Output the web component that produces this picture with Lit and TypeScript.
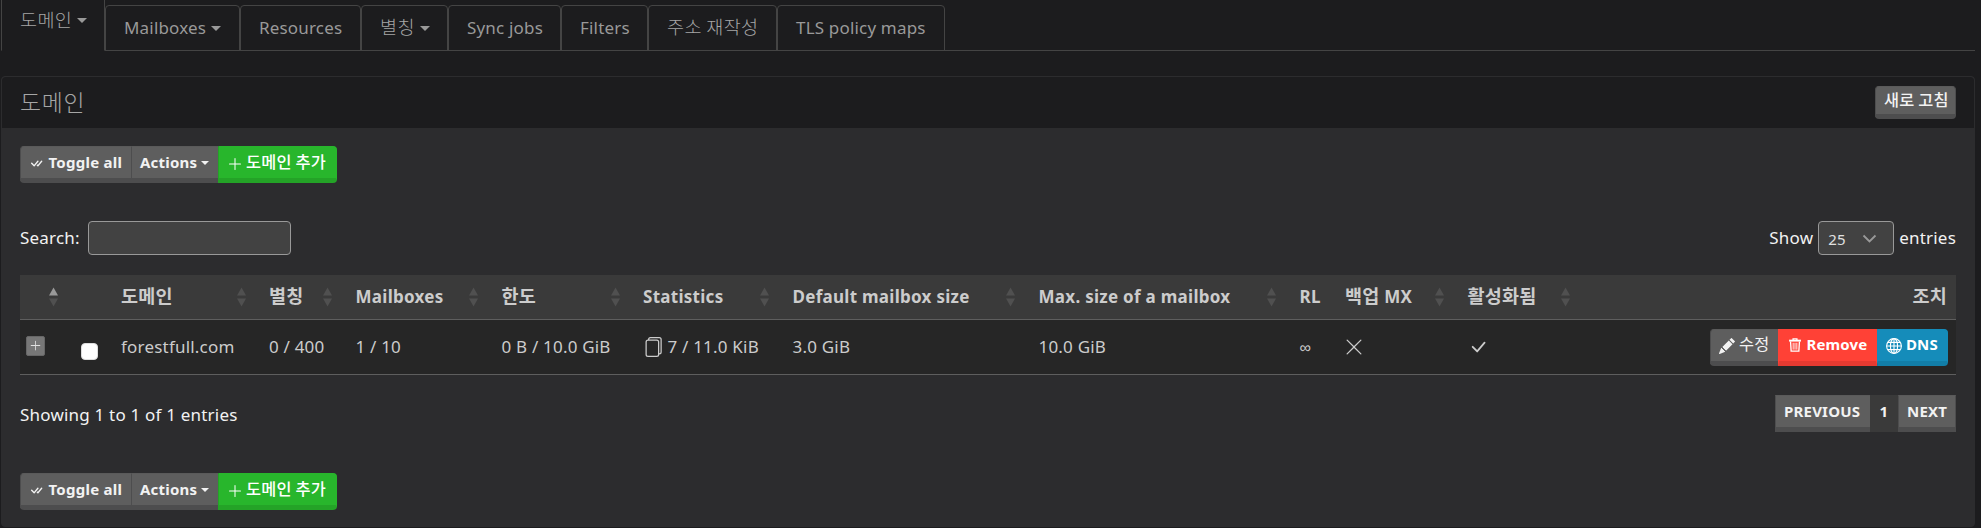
import { LitElement, html, svg, css, nothing } from "lit";
import { customElement, property } from "lit/decorators.js";

const ICONS: Record<string, string> = {
  checkAll: "M8.97 4.97a.75.75 0 0 1 1.07 1.05l-3.99 4.99a.75.75 0 0 1-1.08.02L2.324 8.384a.75.75 0 1 1 1.06-1.06l2.094 2.093L8.95 4.992zm-.92 5.14.92.92a.75.75 0 0 0 1.079-.02l3.992-4.99a.75.75 0 1 0-1.091-1.028L9.477 9.417l-.485-.486z",
  plus: "M8 2a.5.5 0 0 1 .5.5v5h5a.5.5 0 0 1 0 1h-5v5a.5.5 0 0 1-1 0v-5h-5a.5.5 0 0 1 0-1h5v-5A.5.5 0 0 1 8 2",
  files: "M13 0H6a2 2 0 0 0-2 2 2 2 0 0 0-2 2v10a2 2 0 0 0 2 2h7a2 2 0 0 0 2-2 2 2 0 0 0 2-2V2a2 2 0 0 0-2-2m0 13V4a2 2 0 0 0-2-2H5a1 1 0 0 1 1-1h7a1 1 0 0 1 1 1v10a1 1 0 0 1-1 1M3 4a1 1 0 0 1 1-1h7a1 1 0 0 1 1 1v10a1 1 0 0 1-1 1H4a1 1 0 0 1-1-1z",
  x: "M2.146 2.854a.5.5 0 1 1 .708-.708L8 7.293l5.146-5.147a.5.5 0 0 1 .708.708L8.707 8l5.147 5.146a.5.5 0 0 1-.708.708L8 8.707l-5.146 5.147a.5.5 0 0 1-.708-.708L7.293 8z",
  check: "M12.736 3.97a.733.733 0 0 1 1.047 0c.286.289.29.756.01 1.05L7.88 12.01a.733.733 0 0 1-1.065.02L3.217 8.384a.757.757 0 0 1 0-1.06.733.733 0 0 1 1.047 0l3.052 3.093 5.4-6.425z",
  pencil: "M12.854.146a.5.5 0 0 0-.707 0L10.5 1.793 14.207 5.5l1.647-1.646a.5.5 0 0 0 0-.708zm.646 6.061L9.793 2.5 3.293 9H3.5a.5.5 0 0 1 .5.5v.5h.5a.5.5 0 0 1 .5.5v.5h.5a.5.5 0 0 1 .5.5v.5h.5a.5.5 0 0 1 .5.5v.207zm-7.468 7.468A.5.5 0 0 1 6 13.5V13h-.5a.5.5 0 0 1-.5-.5V12h-.5a.5.5 0 0 1-.5-.5V11h-.5a.5.5 0 0 1-.5-.5V10h-.5a.5.5 0 0 1-.175-.032l-.179.178a.5.5 0 0 0-.11.168l-2 5a.5.5 0 0 0 .65.65l5-2a.5.5 0 0 0 .168-.11z",
};

/** Wraps runs of Hangul so they can be sized apart from the Latin text. */
const mixed = (text: string) =>
  text
    .split(/([\uac00-\ud7a3]+(?: [\uac00-\ud7a3]+)*)/)
    .map((part) => (/[\uac00-\ud7a3]/.test(part) ? html`<span class="ko">${part}</span>` : part));

const icon = (name: string) => {
  let body;
  if (name === "trash") {
    body = svg`<g fill="none" stroke="currentColor" stroke-width="1.5"><path d="M1.2 3h13.6" stroke-width="2.2"/><path d="M5.8 2.4V.9h4.4v1.5"/><path d="M2.9 4l.7 11.1h8.8L13.1 4"/><path d="M5.9 5.5v7.8M8 5.5v7.8M10.1 5.5v7.8" stroke-width="1"/></g>`;
  } else if (name === "globe") {
    body = svg`<g fill="none" stroke="currentColor" stroke-width="1.1"><circle cx="8" cy="8" r="7.4"/><ellipse cx="8" cy="8" rx="3.6" ry="7.4"/><path d="M8 .6v14.8M.6 8h14.8M1.7 4.4h12.6M1.7 11.6h12.6"/></g>`;
  } else {
    body = svg`<path fill="currentColor" d=${ICONS[name]} />`;
  }
  return html`<svg class="icon ${name}" viewBox="0 0 16 16">${body}</svg>`;
};

const shared = css`
  * { box-sizing: border-box; }
  .ko { font-family: "Noto Sans CJK KR", sans-serif; font-size: 1.09em; line-height: 1; letter-spacing: 0.01em; }
  .icon { display: block; flex: none; }
  .caret { width: 0; height: 0; border: 5px solid transparent; border-top-color: currentColor; border-bottom: 0; flex: none; }
`;

@customElement("lumen-button")
class LumenButton extends LitElement {
  @property() label = "";
  @property() icon = "";
  @property() tone = "gray";
  @property({ type: Boolean }) caret = false;
  static styles = [shared, css`
    :host { display: block; }
    button {
      display: flex; align-items: center; width: 100%; height: 100%; margin: 0; padding: 0 0 0 8px;
      border: 1px solid #4d4d4e; border-bottom-width: 5px; border-top-color: #5a5a5a; border-right-width: var(--br, 1px);
      border-radius: var(--r, 0); background: #5e5e5e; color: #f2f2f2;
      font: 700 15px/20px "Noto Sans", "Noto Sans CJK KR", sans-serif; letter-spacing: var(--ls, 0.1px); white-space: nowrap;
    }
    .green { background: #28b62c; border-color: #28b62c; border-bottom-color: #24a327; border-left-color: #24a327; color: #fff; }
    .red { background: #ff4136; border-color: #ff4136; border-bottom-color: #e63a31; color: #fff; }
    .blue { background: #158cba; border-color: #158cba; border-bottom-color: #127ea8; color: #fff; }
    .text { position: relative; top: -1px; }
    .ko { font-weight: var(--ko-weight, 500); }
    .caret { margin-left: 4px; border-width: 4px; border-bottom: 0; }
    .checkAll { width: 15px; height: 15px; margin: 1px 4.5px 0 0; }
    .plus { width: 16px; height: 16px; margin: 2px 3px 0 0; }
    .pencil { width: 16px; height: 16px; margin: 1px 4px 0 0; }
    .trash { width: 14px; height: 14px; margin: 0 4.5px 0 1px; }
    .globe { width: 16px; height: 16px; margin: 1px 4px 0 0; }
  `];
  render() {
    return html`<button class=${this.tone}>
      ${this.icon ? icon(this.icon) : nothing}<span class="text">${mixed(this.label)}</span>
      ${this.caret ? html`<span class="caret"></span>` : nothing}
    </button>`;
  }
}

const TABS = [
  { label: "도메인", caret: true, w: 104 },
  { label: "Mailboxes", caret: true, w: 135 },
  { label: "Resources", w: 121 },
  { label: "별칭", caret: true, w: 87 },
  { label: "Sync jobs", w: 113 },
  { label: "Filters", w: 87 },
  { label: "주소 재작성", w: 129 },
  { label: "TLS policy maps", w: 168 },
];

const COLUMNS = [
  { label: "", w: 52, sort: "asc" },
  { label: "", w: 40 },
  { label: "도메인", w: 148, sort: "both" },
  { label: "별칭", w: 86.5, sort: "both" },
  { label: "Mailboxes", w: 146, sort: "both" },
  { label: "한도", w: 141.5, sort: "both" },
  { label: "Statistics", w: 149.5, sort: "both" },
  { label: "Default mailbox size", w: 246, sort: "both" },
  { label: "Max. size of a mailbox", w: 261, sort: "both" },
  { label: "RL", w: 45.5 },
  { label: "백업 MX", w: 122.5, sort: "both" },
  { label: "활성화됨", w: 125.5, sort: "both" },
  { label: "조치", w: 372 },
];

@customElement("app-root")
class AppRoot extends LitElement {
  static styles = [shared, css`
    :host {
      display: flex; flex-direction: column; height: 528px; overflow: hidden; padding: 0 6px 0 1px;
      background: #1c1c1e; color: #f2f2f2; font: 17px/24px "Noto Sans", "Noto Sans CJK KR", sans-serif; letter-spacing: 0.2px;
    }
    .tabs { display: flex; align-items: flex-end; height: 51px; border-bottom: 1px solid #444; color: #999; letter-spacing: 0.18px; flex: none; }
    .tab {
      display: flex; align-items: center; height: 46px; margin-bottom: -1px; padding: 0 0 0 18px;
      border: 1px solid #444; border-radius: 4px 4px 0 0; white-space: nowrap;
    }
    .tab.active { height: 55px; border-bottom-color: #1c1c1e; background: #1c1c1e; padding-bottom: 6px; }
    .tab .caret { margin-left: 5px; }
    .tab .ko, .title .ko { font-weight: 300; color: #a6a6a6; }
    .tab .ko { letter-spacing: 0.02em; }
    .panel { display: flex; flex-direction: column; height: 451px; margin-top: 25px; border: 1px solid #2c2c2e; border-radius: 4px; background: #2c2c2e; flex: none; }
    .head { display: flex; justify-content: space-between; align-items: flex-start; height: 51px; padding: 9px 18px 0; background: #1c1c1e; border-radius: 4px 4px 0 0; color: #999; font-size: 21px; flex: none; }
    .title { line-height: 30px; padding-top: 1.5px; }
    .title .ko { letter-spacing: 0.03em; }
    .refresh { width: 81px; height: 33px; --r: 4px; }
    .body { padding: 18px 18px 0; }
    .group { display: flex; height: 37px; width: max-content; }
    .group > :first-child { --r: 4px 0 0 4px; }
    .group > :last-child { --r: 0 4px 4px 0; }
    .b1 { width: 111px; --ls: 0.25px; --br: 0; } .b2 { width: 87px; --ls: 0.2px; --br: 0; } .b3 { width: 119px; }
    .controls { display: flex; justify-content: space-between; align-items: flex-start; height: 54px; margin-top: 38px; }
    .field { display: flex; align-items: center; height: 34px; }
    .search { width: 203px; height: 34px; margin-left: 8px; border: 1px solid #999; border-radius: 4px; background: #424242; }
    .select { display: flex; align-items: center; justify-content: space-between; width: 76px; height: 34px; margin: 0 5px 0 5px; padding: 2px 16px 0 9px; border: 1px solid #999; border-radius: 4px; background: #424242; font-size: 15px; color: #e0e0e0; }
    .chev { width: 15px; height: 10px; }
    table { width: 1936px; table-layout: fixed; border-collapse: separate; border-spacing: 0; color: #ccc; }
    th { height: 45px; padding: 0 14.5px 0 9px; background: #3a3a3a; border-bottom: 1px solid #5e5e5e; text-align: left; font-weight: 700; letter-spacing: 0.28px; white-space: nowrap; }
    th:last-child { padding-right: 9px; }
    td { height: 55px; padding: 0 9px; background: #262626; border-bottom: 1px solid #5e5e5e; white-space: nowrap; }
    .hcell { display: flex; align-items: center; justify-content: space-between; }
    .hcell.end { justify-content: flex-end; }
    .hlabel { min-width: 1px; }
    .sort { width: 9px; height: 20px; flex: none; }
    .expand { display: flex; align-items: center; justify-content: center; width: 19px; height: 20px; margin: -3px 0 0 -3px; border: 1px solid #666; border-radius: 2px; background: #777; color: #e0e0e0; }
    .expand .icon { width: 13px; height: 13px; }
    .cb { width: 17px; height: 17px; margin-top: 8px; border-radius: 4px; background: #fff; border: 1px solid #ddd; }
    .stat { display: flex; align-items: center; }
    .files { width: 20px; height: 20px; margin-right: 4.5px; }
    .inf { font-family: "Liberation Sans", sans-serif; font-size: 16px; }
    td .x { width: 20px; height: 20px; margin-left: -1px; }
    td .check { width: 20px; height: 20px; }
    .actions { margin-left: auto; margin-right: -1px; }
    .a1 { width: 68px; --ko-weight: 400; --br: 0; } .a2 { width: 99px; --ls: 0.15px; } .a3 { width: 71px; }
    .foot { display: flex; justify-content: space-between; margin-top: 20px; height: 37px; }
    .info { line-height: 40px; }
    .pager { display: flex; --ls: 0.2px; }
    .p1 { width: 95px; --br: 0; } .p3 { width: 58px; }
    .cur { width: 28px; text-align: center; background: #3a3a3a; font-weight: 700; font-size: 15px; line-height: 33px; }
    .bottom { margin-top: 41px; }
  `];

  private group(extra = "") {
    return html`<div class="group ${extra}">
      <lumen-button class="b1" icon="checkAll" label="Toggle all"></lumen-button>
      <lumen-button class="b2" label="Actions" caret></lumen-button>
      <lumen-button class="b3" tone="green" icon="plus" label="도메인 추가"></lumen-button>
    </div>`;
  }

  private sort(kind: string) {
    return html`<svg class="sort" viewBox="0 0 9 20">
      <path d="M0 8.5L4.5 0.5L9 8.5Z" fill=${kind === "asc" ? "#999" : "#505050"} />
      <path d="M0 11.5L4.5 19.5L9 11.5Z" fill="#505050" />
    </svg>`;
  }

  render() {
    return html`
      <nav class="tabs">
        ${TABS.map((t, i) => html`<div class="tab ${i ? "" : "active"}" style="width:${t.w}px">
          <span>${mixed(t.label)}</span>${t.caret ? html`<span class="caret"></span>` : nothing}</div>`)}
      </nav>
      <section class="panel">
        <div class="head">
          <span class="title">${mixed("도메인")}</span>
          <lumen-button class="refresh" label="새로 고침"></lumen-button>
        </div>
        <div class="body">
          ${this.group()}
          <div class="controls">
            <div class="field"><span>Search:</span><div class="search"></div></div>
            <div class="field"><span>Show</span>
              <div class="select"><span>25</span><svg class="chev" viewBox="0 0 15 10"><path d="M1.5 1.5l6 6 6-6" fill="none" stroke="#999" stroke-width="1.8"/></svg></div>
              <span>entries</span></div>
          </div>
          <table>
            <colgroup>${COLUMNS.map((c) => html`<col style="width:${c.w}px" />`)}</colgroup>
            <thead><tr>${COLUMNS.map((c, i) => html`<th><div class="hcell ${i === COLUMNS.length - 1 ? "end" : ""}">
              <span class="hlabel">${mixed(c.label)}</span>${c.sort ? this.sort(c.sort) : nothing}</div></th>`)}</tr></thead>
            <tbody><tr>
              <td><div class="expand">${icon("plus")}</div></td>
              <td><div class="cb"></div></td>
              <td>forestfull.com</td>
              <td>0 / 400</td>
              <td>1 / 10</td>
              <td>0 B / 10.0 GiB</td>
              <td><div class="stat">${icon("files")}<span>7 / 11.0 KiB</span></div></td>
              <td>3.0 GiB</td>
              <td>10.0 GiB</td>
              <td><span class="inf">∞</span></td>
              <td>${icon("x")}</td>
              <td>${icon("check")}</td>
              <td><div class="group actions">
                <lumen-button class="a1" icon="pencil" label="수정"></lumen-button>
                <lumen-button class="a2" tone="red" icon="trash" label="Remove"></lumen-button>
                <lumen-button class="a3" tone="blue" icon="globe" label="DNS"></lumen-button>
              </div></td>
            </tr></tbody>
          </table>
          <div class="foot">
            <span class="info">Showing 1 to 1 of 1 entries</span>
            <div class="pager">
              <lumen-button class="p1" label="PREVIOUS"></lumen-button>
              <div class="cur">1</div>
              <lumen-button class="p3" label="NEXT"></lumen-button>
            </div>
          </div>
          ${this.group("bottom")}
        </div>
      </section>`;
  }
}
